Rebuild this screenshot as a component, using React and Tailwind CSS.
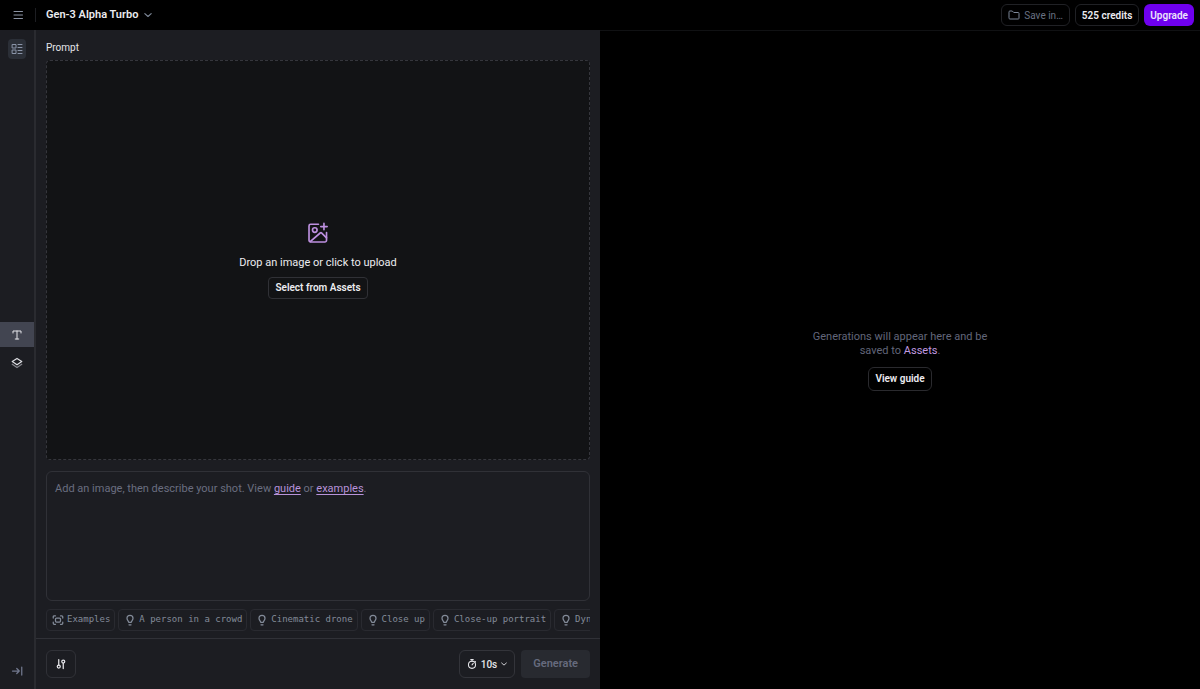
import { useState } from "react";

const suggestions = [
  "A person in a crowd",
  "Cinematic drone",
  "Close up",
  "Close-up portrait",
  "Dynamic motion",
];

function Icon({ size, children, className = "", stroke = 1.5 }) {
  return (
    <svg
      width={size}
      height={size}
      viewBox="0 0 24 24"
      fill="none"
      stroke="currentColor"
      strokeWidth={stroke}
      strokeLinecap="round"
      strokeLinejoin="round"
      aria-hidden="true"
      className={`shrink-0 ${className}`}
    >
      {children}
    </svg>
  );
}

function Chevron({ size, className }) {
  return (
    <Icon size={size} stroke={3.5} className={className}>
      <path d="M2.5 8l9.5 8.5L21.5 8" />
    </Icon>
  );
}

function Bulb() {
  return (
    <Icon size={12} stroke={2.5}>
      <path d="M9.5 16.5c0-2.5-3.5-3.8-3.500-8a6 6 0 0 1 12 0c0 4.2-3.5 5.5-3.5 8z" />
      <path d="M10 21.5h4" />
    </Icon>
  );
}

function Header() {
  return (
    <header className="flex h-[30px] shrink-0 items-center bg-black pr-1.5">
      <div className="flex w-9 shrink-0 justify-center border-r border-[#1d1e22]">
        <button type="button" aria-label="Menu" className="flex h-3.5 items-center text-[#8b93a3]">
          <Icon size={12} stroke={2}>
            <path d="M4 5h17M4 12h17M4 19h17" />
          </Icon>
        </button>
      </div>
      <button type="button" className="ml-2.5 flex items-center gap-1.5 text-[11px] font-semibold text-[#ececf0]">
        Gen-3 Alpha Turbo
        <Chevron size={8} className="text-[#7d8797]" />
      </button>
      <div className="ml-auto flex items-center gap-[5px]">
        <button type="button" className="flex h-[22px] items-center gap-1 rounded-md border border-[#202125] px-1.5 text-[10px] text-[#687182]">
          <Icon size={12} stroke={2} className="text-[#7c8798]">
            <path d="M2 5.5a1.500 1.500 0 0 1 1.500-1.500h5l3 3h9A1.500 1.500 0 0 1 22 8.500v10a1.500 1.500 0 0 1-1.500 1.500h-17A1.500 1.500 0 0 1 2 18.500z" />
          </Icon>
          Save in…
        </button>
        <button type="button" className="h-[22px] rounded-md border border-[#202125] px-1.5 text-[10px] font-semibold text-[#ececf0]">
          525 credits
        </button>
        <button type="button" className="h-[22px] rounded-md bg-[#6e00ee] px-1.5 text-[10px] font-semibold text-[#ece2fb]">
          Upgrade
        </button>
      </div>
    </header>
  );
}

function Sidebar() {
  return (
    <nav aria-label="Tools" className="flex w-9 shrink-0 flex-col justify-between border-r-2 border-[#2a2b30] bg-[#1c1d22]">
      <div className="flex justify-center pt-[9px]">
        <button type="button" aria-label="Sessions" className="flex h-5 w-[18px] items-center justify-center rounded bg-[#2b2f37] text-[#8a94a8]">
          <Icon size={12} stroke={2}>
            <rect x="3" y="3" width="7" height="7" />
            <rect x="3" y="14" width="7" height="7" />
            <path d="M14 3h8M14 9h8M14 15h8M14 21h8" />
          </Icon>
        </button>
      </div>
      <div className="flex flex-col gap-[3px]">
        <button type="button" aria-label="Text" className="flex h-[25px] items-center justify-center bg-[#424551] text-[#e4e5ea]">
          <Icon size={12} stroke={2}>
            <path d="M4 8V4h16v4M12 4v16M8.500 20h7" />
          </Icon>
        </button>
        <button type="button" aria-label="Layers" className="flex h-[25px] items-center justify-center text-[#dcdde2]">
          <Icon size={12} stroke={2.5}>
            <path d="M12 3L2.500 9.200L12 15.500l9.500-6.300z" />
            <path d="M2.500 14.500L12 21l9.500-6.500" className="text-[#85868d]" stroke="currentColor" />
          </Icon>
        </button>
      </div>
      <div className="flex h-[51px] items-end justify-center pb-3">
        <button type="button" aria-label="Expand sidebar" className="text-[#71788e]">
          <Icon size={12} stroke={2.5}>
            <path d="M3 12h13M11.500 7l5 5-5 5M21.500 4v16" />
          </Icon>
        </button>
      </div>
    </nav>
  );
}

function PromptBox() {
  const [text, setText] = useState("");
  return (
    <div className="relative mt-[11px] h-[130px]">
      <textarea
        aria-label="Describe your shot"
        value={text}
        onChange={(event) => setText(event.target.value)}
        className="block h-full w-full resize-none rounded-md border border-[#303137] bg-transparent px-2 py-[9px] text-[11px] leading-4 text-[#e6e6ea] outline-none"
      />
      {text === "" && (
        <p className="pointer-events-none absolute top-2.5 left-[9px] text-[11px] leading-4 text-[#6a6e80]">
          Add an image, then describe your shot. View{" "}
          <a href="#guide" className="pointer-events-auto text-[#b893da] underline underline-offset-2">guide</a> or{" "}
          <a href="#examples" className="pointer-events-auto text-[#b893da] underline underline-offset-2">examples</a>.
        </p>
      )}
    </div>
  );
}

const chip =
  "flex h-[22px] shrink-0 items-center gap-[3px] rounded border border-[#292a30] pr-1 pl-[5px] font-['DejaVu_Sans_Mono',monospace] text-[9px] whitespace-nowrap text-[#838b99]";

function Editor() {
  return (
    <section className="flex min-w-0 flex-1 flex-col bg-[#1c1d22]">
      <div className="flex flex-1 flex-col px-2.5 pt-[9px] pb-[7px]">
        <h2 className="text-[10px] leading-[18px] text-[#e4e5ea]">Prompt</h2>
        <div className="mt-[3px] flex flex-1 flex-col items-center justify-center rounded border border-dashed border-[#35363c] bg-[#121315]">
          <button type="button" className="flex flex-col items-center gap-[11px] text-[11px] leading-4 text-[#ececf0]">
            <Icon size={22} stroke={1.8} className="text-[#bd90df]">
              <path d="M12.500 2.500H4A1.800 1.800 0 0 0 2.200 4.300V20A1.800 1.800 0 0 0 4 21.800h15.500a1.800 1.800 0 0 0 1.800-1.800v-8.500" />
              <path d="M18.500 1.500v7M15 5h7M3.500 21.300L14.400 12c.6-.5 1.200-.4 1.700.1l5.200 5.300" />
              <circle cx="8.500" cy="8.800" r="2.500" />
            </Icon>
            Drop an image or click to upload
          </button>
          <button type="button" className="mt-1.5 h-[22px] rounded border border-[#303136] px-1.5 text-[10px] font-semibold text-[#ececf0]">
            Select from Assets
          </button>
        </div>
        <PromptBox />
        <div className="mt-2 flex gap-[3px] overflow-hidden">
          <button type="button" className={chip}>
            <Icon size={12} stroke={2.5}>
              <path d="M2.500 8V5.500a2 2 0 0 1 2-2H7M17 3.500h2.500a2 2 0 0 1 2 2V8M21.500 16v2.500a2 2 0 0 1-2 2H17M7 20.500H4.500a2 2 0 0 1-2-2V16" />
              <rect x="7" y="8" width="10" height="8" rx="2" />
            </Icon>
            Examples
          </button>
          {suggestions.map((label) => (
            <button key={label} type="button" className={chip}>
              <Bulb />
              {label}
            </button>
          ))}
        </div>
      </div>
      <div className="flex h-[51px] shrink-0 items-center gap-1.5 border-t border-[#303137] px-2.5">
        <button type="button" aria-label="Settings" className="mr-auto flex h-7 w-[30px] items-center justify-center rounded-md border border-[#303137] text-[#e6e6ea]">
          <Icon size={12} stroke={2.5}>
            <path d="M7.500 3v11M16.500 10v11" />
            <circle cx="7.500" cy="17" r="3" />
            <circle cx="16.500" cy="7" r="3" />
          </Icon>
        </button>
        <button type="button" className="flex h-7 items-center gap-1 rounded-md border border-[#33343a] px-[7px] text-[10px] font-medium text-[#e6e6ea]">
          <Icon size={10} stroke={2.5}>
            <circle cx="12" cy="14" r="8.500" />
            <path d="M9 1.500h6M12 1.500v4M12 14l3-3.500M19 5.500l1.500 1.500" />
          </Icon>
          10s
          <Chevron size={6} />
        </button>
        <button type="button" className="h-7 rounded bg-[#282a30] px-3 text-[11px] font-semibold text-[#666b7e]">
          Generate
        </button>
      </div>
    </section>
  );
}

export default function App() {
  return (
    <div className="flex min-h-screen flex-col bg-black font-['Roboto',sans-serif]">
      <Header />
      <main className="flex flex-1">
        <div className="flex w-1/2 min-w-0">
          <Sidebar />
          <Editor />
        </div>
        <section className="flex w-1/2 flex-col items-center justify-center border-t border-[#101113] bg-black">
          <p className="max-w-[190px] text-center text-[11px] leading-[14px] text-[#62667a]">
            Generations will appear here and be saved to{" "}
            <a href="#assets" className="text-[#c09ae0]">Assets</a>.
          </p>
          <button type="button" className="mt-[9px] h-6 rounded-md border border-[#2a2a2e] px-1.5 text-[10px] font-semibold text-[#ececf0]">
            View guide
          </button>
        </section>
      </main>
    </div>
  );
}
